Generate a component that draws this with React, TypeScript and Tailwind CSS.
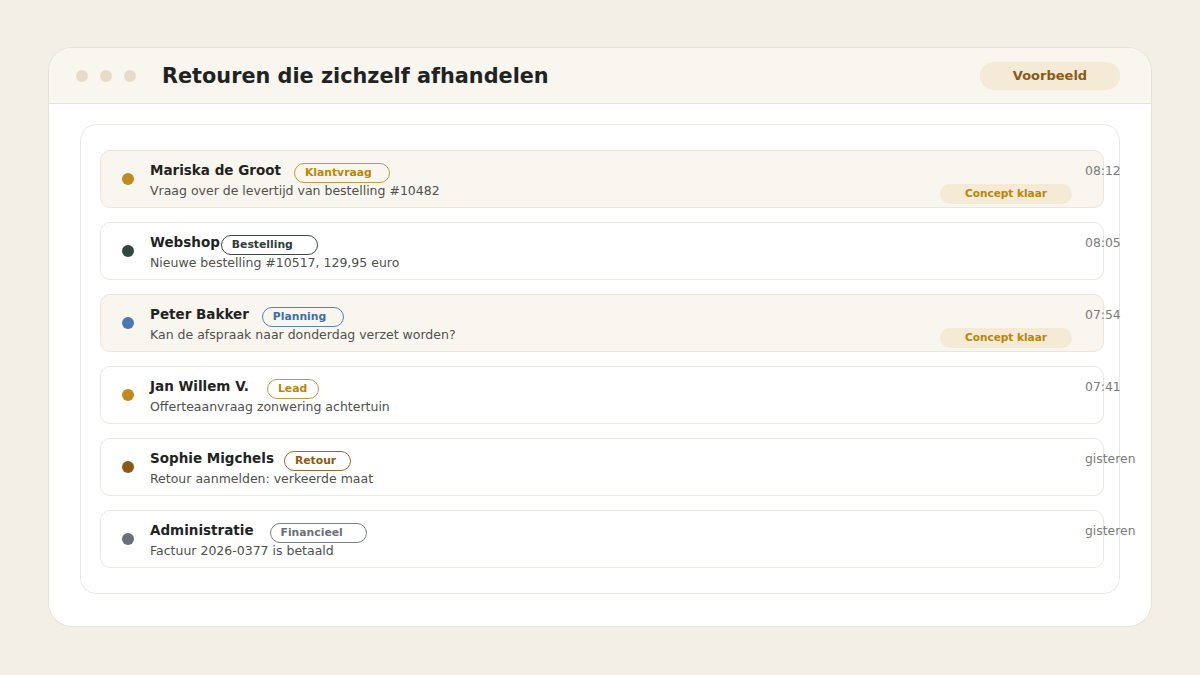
const rows = [
  {
    name: 'Mariska de Groot',
    text: 'Vraag over de levertijd van bestelling #10482',
    tag: 'Klantvraag',
    time: '08:12',
    dot: 'bg-[#bf8a1e]',
    tagCls: 'ml-[13px] w-[96px] border-[#c49a3c] text-[#b8860b]',
    draft: true,
  },
  {
    name: 'Webshop',
    text: 'Nieuwe bestelling #10517, 129,95 euro',
    tag: 'Bestelling',
    time: '08:05',
    dot: 'bg-[#2f473d]',
    tagCls: 'ml-[1px] w-[97px] border-[#3b4a43] text-[#2f3d36]',
    draft: false,
  },
  {
    name: 'Peter Bakker',
    text: 'Kan de afspraak naar donderdag verzet worden?',
    tag: 'Planning',
    time: '07:54',
    dot: 'bg-[#4a78b0]',
    tagCls: 'ml-[13px] w-[82px] border-[#5a82b4] text-[#3d6fa8]',
    draft: true,
  },
  {
    name: 'Jan Willem V.',
    text: 'Offerteaanvraag zonwering achtertuin',
    tag: 'Lead',
    time: '07:41',
    dot: 'bg-[#bf8a1e]',
    tagCls: 'ml-[18px] w-[52px] border-[#c49a3c] text-[#b8860b]',
    draft: false,
  },
  {
    name: 'Sophie Migchels',
    text: 'Retour aanmelden: verkeerde maat',
    tag: 'Retour',
    time: 'gisteren',
    dot: 'bg-[#8b5a1a]',
    tagCls: 'ml-[10px] w-[67px] border-[#9a6a2c] text-[#8b5a1a]',
    draft: false,
  },
  {
    name: 'Administratie',
    text: 'Factuur 2026-0377 is betaald',
    tag: 'Financieel',
    time: 'gisteren',
    dot: 'bg-[#6b7078]',
    tagCls: 'ml-[16px] w-[97px] border-[#7b7f86] text-[#6b7078]',
    draft: false,
  },
]

export default function App() {
  return (
    <div
      className="w-[1200px] h-[675px] bg-[#f3eee6] flex justify-center pt-[47px]"
      style={{ fontFamily: '"DejaVu Sans", "Liberation Sans", sans-serif' }}
    >
      <div className="w-[1104px] h-[580px] bg-white rounded-[24px] border border-[#e8e2d6] overflow-hidden flex flex-col">
        {/* Header */}
        <div className="h-[56px] shrink-0 bg-[#f9f6ef] border-b border-[#e8e2d6] flex items-center pl-[27px] pr-[31px]">
          <div className="flex gap-3">
            <div className="w-3 h-3 rounded-full bg-[#e6dcc8]" />
            <div className="w-3 h-3 rounded-full bg-[#e6dcc8]" />
            <div className="w-3 h-3 rounded-full bg-[#e6dcc8]" />
          </div>
          <h1 className="ml-[26px] pt-[3px] text-[20.8px] font-bold text-[#1f2422]">Retouren die zichzelf afhandelen</h1>
          <div className="ml-auto w-[140px] h-[28px] rounded-full bg-[#f5ead6] flex items-center justify-center pt-[1px] text-[13px] font-bold text-[#8a5a14]">
            Voorbeeld
          </div>
        </div>

        {/* Body */}
        <div className="pt-5 px-[31px]">
          <div className="border border-[#ebe8e2] rounded-[16px] pl-[19px] pr-[15px] py-[25px] flex flex-col gap-[14px]">
            {rows.map((r) => (
              <div
                key={r.name}
                className={`h-[58px] rounded-[10px] border flex ${
                  r.draft ? 'bg-[#f9f6ef] border-[#ece6da]' : 'bg-white border-[#ebe8e2]'
                }`}
              >
                <div className="pl-[21px] flex items-center">
                  <div className={`w-3 h-3 rounded-full ${r.dot}`} />
                </div>
                <div className="ml-4 flex-1 flex flex-col justify-center">
                  <div className="h-5 flex items-start">
                    <span className="text-[13.5px] leading-5 font-bold text-[#1f2422] whitespace-nowrap">{r.name}</span>
                    <span
                      className={`mt-[3px] h-5 shrink-0 rounded-full border pl-[10px] text-[10.8px] font-bold leading-[18px] ${r.tagCls}`}
                    >
                      {r.tag}
                    </span>
                  </div>
                  <div className="mt-[3px] text-[12.5px] leading-4 text-[#50504c] whitespace-nowrap">{r.text}</div>
                </div>
                <div className="w-[163px] shrink-0 flex flex-col justify-between pt-[12px] pb-[3px]">
                  <div className="pl-[145px] text-[12.4px] leading-4 text-[#7a7a7a] whitespace-nowrap">{r.time}</div>
                  {r.draft && (
                    <div className="w-[132px] h-5 rounded-full bg-[#f5ead6] flex items-center justify-center text-[10.5px] font-bold text-[#b8860b]">
                      Concept klaar
                    </div>
                  )}
                </div>
              </div>
            ))}
          </div>
        </div>
      </div>
    </div>
  )
}
